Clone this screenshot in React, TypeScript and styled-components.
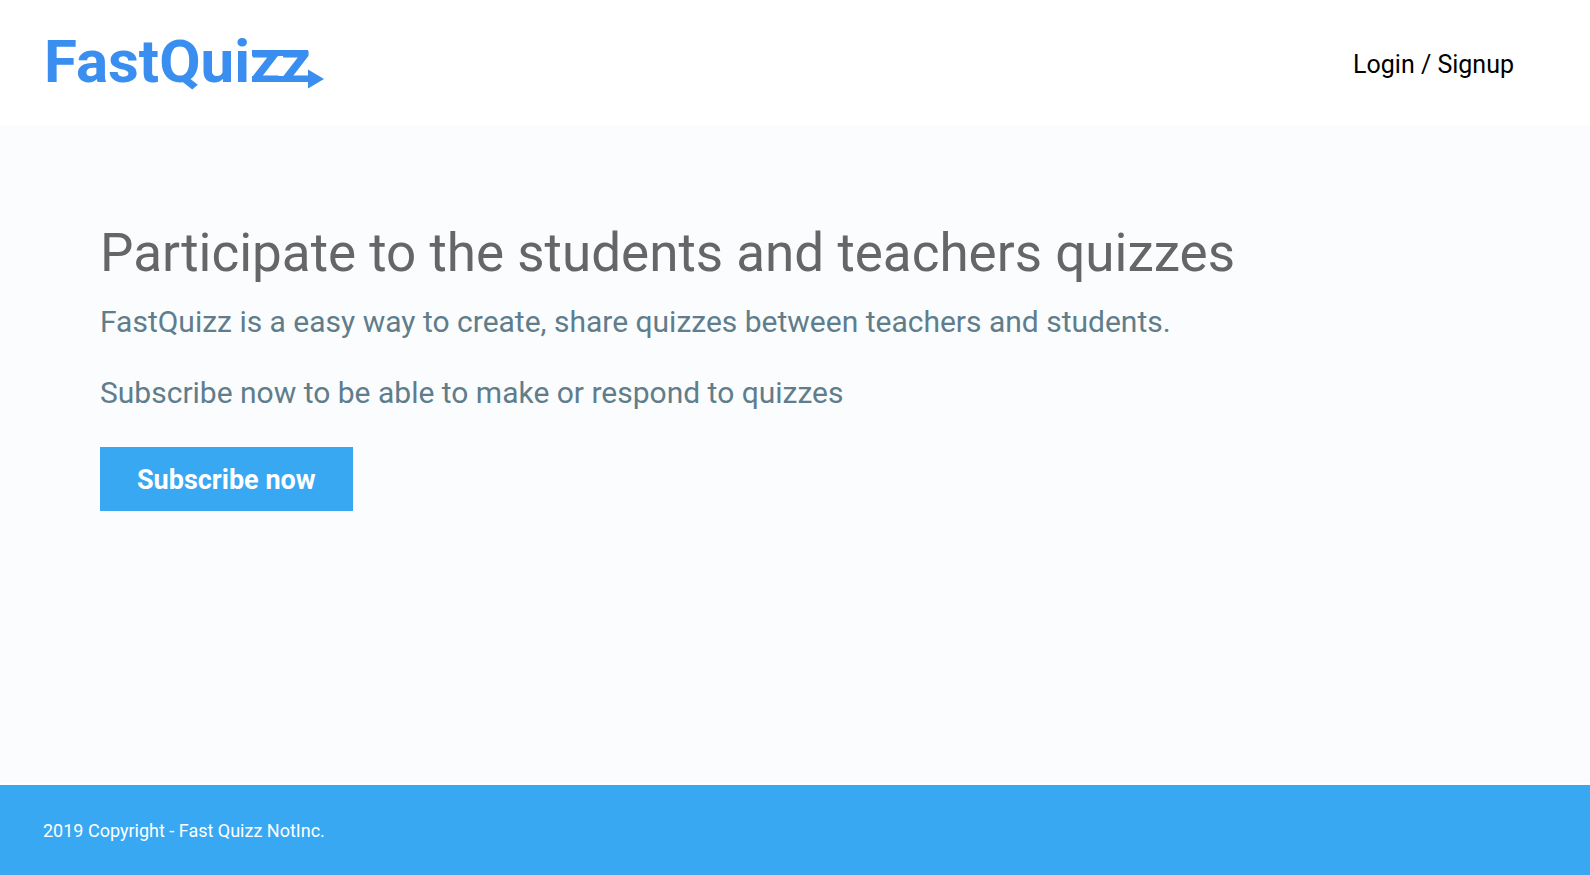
import React from "react";
import styled, { createGlobalStyle } from "styled-components";

const GlobalStyle = createGlobalStyle`
  * { box-sizing: border-box; }
  body { margin: 0; font-family: Roboto, sans-serif; background: #fbfcfe; }
`;

const Page = styled.div`
  display: flex;
  flex-direction: column;
  min-height: 100vh;
`;

const Header = styled.header`
  display: flex;
  align-items: center;
  justify-content: space-between;
  padding: 24px 76px 24px 44px;
  min-height: 125px;
  background: #ffffff;
`;

const Logo = styled.a`
  display: flex;
  align-items: center;
  padding-bottom: 2px;
  color: #398ef0;
  font-size: 60px;
  line-height: 72px;
  font-weight: 700;
  text-decoration: none;
`;

const Arrow = styled.svg`
  width: 72px;
  height: 39px;
  margin: 16px 0 0 -59px;
`;

const LoginLink = styled.a`
  padding-top: 4px;
  color: #000000;
  font-size: 25px;
  line-height: 32px;
  text-decoration: none;
`;

const Main = styled.main`
  flex: 1;
  padding: 96px 100px;
`;

const Title = styled.h1`
  margin: 0 0 19px;
  color: #666666;
  font-size: 53px;
  line-height: 64px;
  font-weight: 400;
`;

const Text = styled.p`
  margin: 0 0 35px;
  color: #607d8b;
  font-size: 30px;
  line-height: 36px;
`;

const SubscribeButton = styled.button`
  margin-top: 1px;
  padding: 17px 37px 15px;
  border: 0;
  background: #38a8f3;
  color: #ffffff;
  font-family: inherit;
  font-size: 27px;
  line-height: 32px;
  font-weight: 700;
  cursor: pointer;
`;

const Footer = styled.footer`
  padding: 36px 43px 34px;
  border-top: 2px solid #ffffff;
  background: #38a8f3;
  color: #ffffff;
  font-size: 18px;
  line-height: 20px;
`;

export default function App() {
  return (
    <Page>
      <GlobalStyle />
      <Header>
        <Logo href="#">
          FastQuizz
          <Arrow viewBox="0 0 72 39" aria-hidden="true">
            <path d="M0 0H56V6H0ZM0 26H56V19.5L72 29L56 38.5V32H0Z" fill="currentColor" />
          </Arrow>
        </Logo>
        <LoginLink href="#login">Login / Signup</LoginLink>
      </Header>
      <Main>
        <Title>Participate to the students and teachers quizzes</Title>
        <Text>FastQuizz is a easy way to create, share quizzes between teachers and students.</Text>
        <Text>Subscribe now to be able to make or respond to quizzes</Text>
        <SubscribeButton type="button">Subscribe now</SubscribeButton>
      </Main>
      <Footer>2019 Copyright - Fast Quizz NotInc.</Footer>
    </Page>
  );
}
